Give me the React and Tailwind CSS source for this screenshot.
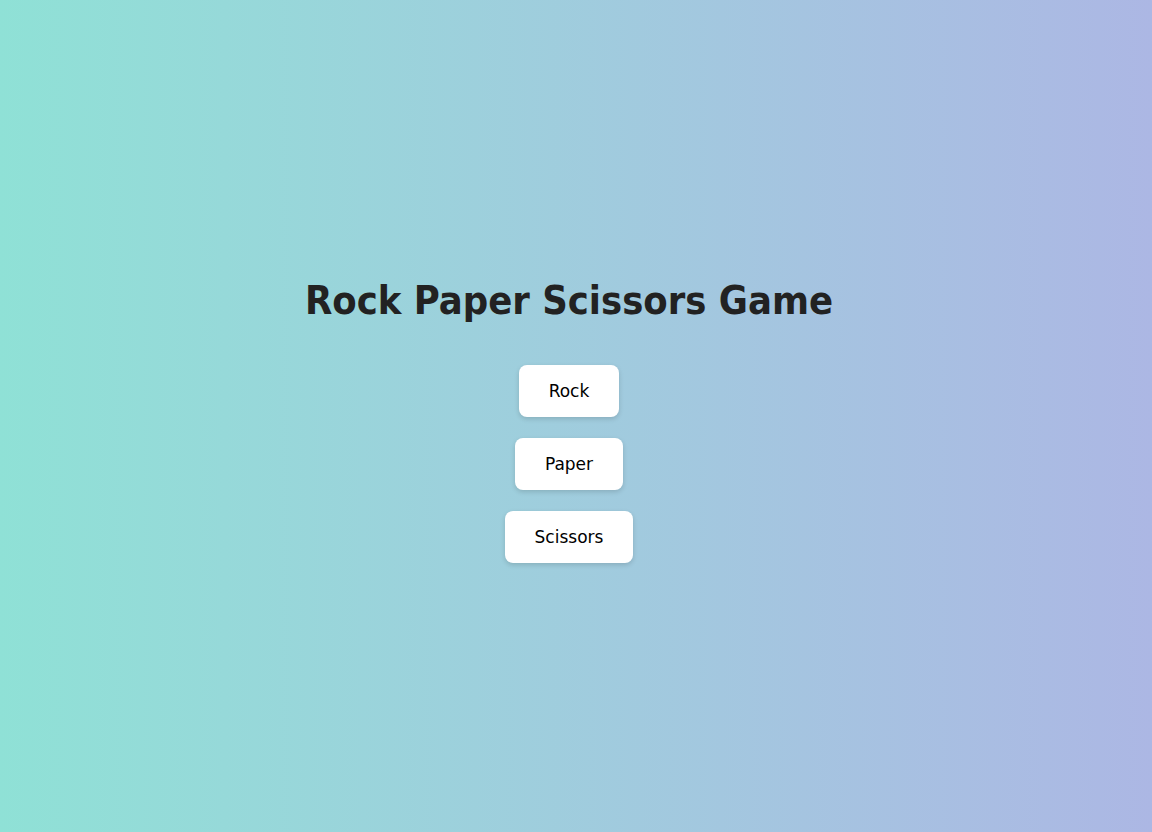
const choices = [
  { label: "Rock", width: "w-[100px]" },
  { label: "Paper", width: "w-[108px]" },
  { label: "Scissors", width: "w-[128px]" },
];

export default function App() {
  return (
    <div className="min-h-screen w-full flex flex-col items-center justify-center pt-[6px] pr-[14px] bg-gradient-to-r from-[#8fe1d6] to-[#acb7e4] font-['DejaVu_Sans',sans-serif]">
      <h1 className="text-[39.5px] leading-[48px] font-bold text-[#222222] mb-[41px] font-['DejaVu_Sans_Condensed','DejaVu_Sans',sans-serif]">
        Rock Paper Scissors Game
      </h1>
      <div className="flex flex-col items-center gap-[21px]">
        {choices.map((choice) => (
          <button
            key={choice.label}
            className={`${choice.width} h-[52px] pt-[2px] bg-white rounded-lg text-[17px] text-black shadow-[0_2px_5px_rgba(0,0,0,0.15)]`}
          >
            {choice.label}
          </button>
        ))}
      </div>
    </div>
  );
}
